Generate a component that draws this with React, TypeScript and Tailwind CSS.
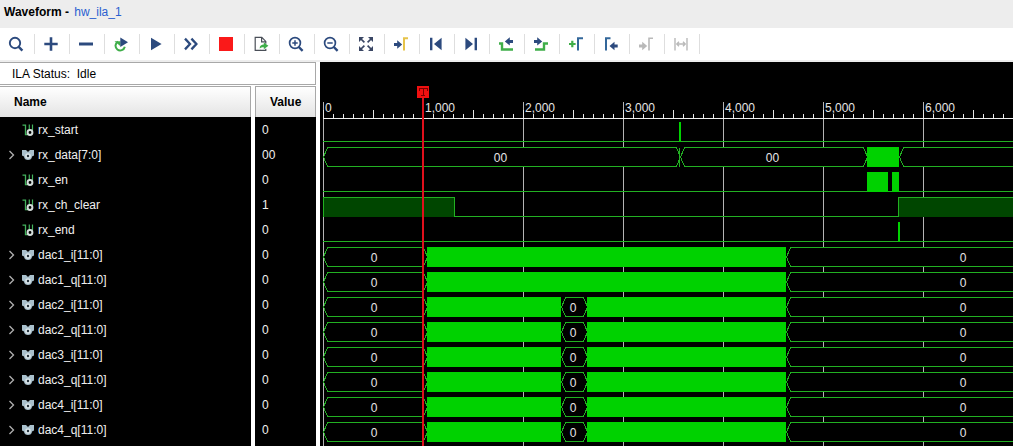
import React, { useLayoutEffect, useRef, useState } from 'react';

interface Segment {
    from: number;
    to: number;
    kind: 'value' | 'busy' | 'high' | 'low' | 'glitch';
    label?: string;
}

interface Signal {
    name: string;
    value: string;
    bus?: boolean;
    segments: Segment[];
}

const TOTAL = 8192;
const ROW = 25;
const RULER = 55;
const ORIGIN = 3;
const TRIGGER = 1000;

const LINE = '#22b022';
const FILL = '#00d200';

const dac1: Segment[] = [
    { from: 0, to: 1040, kind: 'value', label: '0' },
    { from: 1040, to: 4630, kind: 'busy' },
    { from: 4630, to: TOTAL, kind: 'value', label: '0' },
];

const dac: Segment[] = [
    { from: 0, to: 1040, kind: 'value', label: '0' },
    { from: 1040, to: 2380, kind: 'busy' },
    { from: 2380, to: 2640, kind: 'value', label: '0' },
    { from: 2640, to: 4630, kind: 'busy' },
    { from: 4630, to: TOTAL, kind: 'value', label: '0' },
];

const signals: Signal[] = [
    {
        name: 'rx_start',
        value: '0',
        segments: [
            { from: 0, to: TOTAL, kind: 'low' },
            { from: 3560, to: 3580, kind: 'busy' },
        ],
    },
    {
        name: 'rx_data[7:0]',
        value: '00',
        bus: true,
        segments: [
            { from: 0, to: 3570, kind: 'value', label: '00' },
            { from: 3570, to: 5440, kind: 'value', label: '00' },
            { from: 3560, to: 3570, kind: 'glitch' },
            { from: 5440, to: 5760, kind: 'busy' },
            { from: 5760, to: TOTAL, kind: 'value', label: '00' },
        ],
    },
    {
        name: 'rx_en',
        value: '0',
        segments: [
            { from: 0, to: TOTAL, kind: 'low' },
            { from: 5440, to: 5650, kind: 'busy' },
            { from: 5690, to: 5760, kind: 'busy' },
        ],
    },
    {
        name: 'rx_ch_clear',
        value: '1',
        segments: [
            { from: 0, to: 1310, kind: 'high' },
            { from: 1310, to: 5750, kind: 'low' },
            { from: 5750, to: TOTAL, kind: 'high' },
        ],
    },
    {
        name: 'rx_end',
        value: '0',
        segments: [
            { from: 0, to: TOTAL, kind: 'low' },
            { from: 5750, to: 5770, kind: 'busy' },
        ],
    },
    { name: 'dac1_i[11:0]', value: '0', bus: true, segments: dac1 },
    { name: 'dac1_q[11:0]', value: '0', bus: true, segments: dac1 },
    { name: 'dac2_i[11:0]', value: '0', bus: true, segments: dac },
    { name: 'dac2_q[11:0]', value: '0', bus: true, segments: dac },
    { name: 'dac3_i[11:0]', value: '0', bus: true, segments: dac },
    { name: 'dac3_q[11:0]', value: '0', bus: true, segments: dac },
    { name: 'dac4_i[11:0]', value: '0', bus: true, segments: dac },
    { name: 'dac4_q[11:0]', value: '0', bus: true, segments: dac },
];

const NAVY = '#2c4a7e';
const GREEN = '#3fae49';
const GRAY = '#b9b9b9';

const arrowRight = 'M0 -1.5h3.2v-2.7l5 4.2l-5 4.2v-2.7h-3.2z';
const arrowLeft = 'M8.2 -1.5h-3.2v-2.7l-5 4.2l5 4.2v-2.7h3.2z';

const tools: { label: string; icon: React.ReactNode }[] = [
    {
        label: 'Search',
        icon: (
            <g fill="none" stroke={NAVY} strokeWidth="1.9">
                <circle cx="7" cy="7" r="5.2" />
                <path d="M10.5 10.7l3.9 4" strokeWidth="2.4" />
            </g>
        ),
    },
    { label: 'Add', icon: <path d="M1.3 8h13.4M8 1.3v13.4" stroke={NAVY} strokeWidth="2.6" /> },
    { label: 'Remove', icon: <path d="M1 8h14" stroke={NAVY} strokeWidth="3" /> },
    {
        label: 'Run trigger',
        icon: (
            <g>
                <path d="M5 5.6A4.7 4.7 0 1 0 11.8 10.8" fill="none" stroke={GREEN} strokeWidth="2" />
                <path d="M1.5 5.2h6v5z" fill={GREEN} />
                <path d="M7.3 1.4l7.7 4.9l-7.7 4.7z" fill={NAVY} />
            </g>
        ),
    },
    { label: 'Run', icon: <path d="M3 1.8l10.6 6.2l-10.6 6.2z" fill={NAVY} /> },
    {
        label: 'Run immediate',
        icon: <path d="M2 2.6l5 5.4l-5 5.4M8.4 2.6l5 5.4l-5 5.4" fill="none" stroke={NAVY} strokeWidth="2.3" />,
    },
    { label: 'Stop', icon: <path d="M1 1h14v14h-14z" fill="#fa1919" /> },
    {
        label: 'Export',
        icon: (
            <g>
                <path d="M8 14.4H2.2V1.4h6.6l4 4v2.4M8.6 1.6v4.2h4" fill="none" stroke="#4a4f58" strokeWidth="1.2" />
                <path d="M7.5 14.4h5.3v-1.6" fill="none" stroke="#4a4f58" strokeWidth="1.2" />
                <path d="M6.6 12.6c.2-3 1.8-4 4.2-4v-2.2l4.6 3.4l-4.6 3.4v-2c-2 0-3 .2-4.200 1.400z" fill={GREEN} />
            </g>
        ),
    },
    {
        label: 'Zoom in',
        icon: (
            <g fill="none" stroke={NAVY} strokeWidth="1.7">
                <circle cx="7" cy="7" r="5.4" />
                <path d="M10.8 11l3.8 3.8" strokeWidth="2.4" />
                <path d="M4.3 7h5.4M7 4.3v5.4" strokeWidth="1.5" />
            </g>
        ),
    },
    {
        label: 'Zoom out',
        icon: (
            <g fill="none" stroke={NAVY} strokeWidth="1.7">
                <circle cx="7" cy="7" r="5.4" />
                <path d="M10.8 11l3.8 3.8" strokeWidth="2.4" />
                <path d="M4.3 7h5.4" strokeWidth="1.5" />
            </g>
        ),
    },
    {
        label: 'Zoom fit',
        icon: (
            <g>
                <path d="M1 1h5l-5 5zM15 1v5l-5-5zM1 15v-5l5 5zM15 15h-5l5-5z" fill="#3a4664" />
                <path d="M3 3l3.4 3.4M13 3l-3.4 3.4M3 13l3.4-3.4M13 13l-3.4-3.4" stroke="#3a4664" strokeWidth="1.7" />
            </g>
        ),
    },
    {
        label: 'Go to trigger',
        icon: (
            <g>
                <path d={arrowRight} transform="translate(1 8.5)" fill={NAVY} />
                <path d="M11 14.5V2.3h4" fill="none" stroke="#e6c34a" strokeWidth="2" />
            </g>
        ),
    },
    {
        label: 'Go to start',
        icon: <path d="M2 1.8h2.4v12.4h-2.4zM13.6 1.8v12.4l-7.6-6.2z" fill={NAVY} />,
    },
    {
        label: 'Go to end',
        icon: <path d="M11.6 1.8h2.4v12.4h-2.4zM2.4 1.8v12.4l7.6-6.2z" fill={NAVY} />,
    },
    {
        label: 'Previous transition',
        icon: (
            <g>
                <path d="M1 7.5h3v6h11" fill="none" stroke={GREEN} strokeWidth="2.4" />
                <path d={arrowLeft} transform="translate(6.8 5.4)" fill={NAVY} />
            </g>
        ),
    },
    {
        label: 'Next transition',
        icon: (
            <g>
                <path d="M2 13.5h9v-6h4" fill="none" stroke={GREEN} strokeWidth="2.4" />
                <path d={arrowRight} transform="translate(1 5.4)" fill={NAVY} />
            </g>
        ),
    },
    {
        label: 'Add marker',
        icon: (
            <g>
                <path d="M1 8h6.6M4.3 4.7v6.6" stroke={GREEN} strokeWidth="2.2" />
                <path d="M10 14.5V2.3h5" fill="none" stroke="#33679a" strokeWidth="2" />
            </g>
        ),
    },
    {
        label: 'Previous marker',
        icon: (
            <g>
                <path d="M3 14.5V2.3h4.5" fill="none" stroke="#33679a" strokeWidth="2" />
                <path d={arrowLeft} transform="translate(6.5 10)" fill={NAVY} />
            </g>
        ),
    },
    {
        label: 'Next marker',
        icon: (
            <g>
                <path d={arrowRight} transform="translate(1 10)" fill={GRAY} />
                <path d="M11 14.5V2.3h4" fill="none" stroke={GRAY} strokeWidth="1.6" />
            </g>
        ),
    },
    {
        label: 'Swap cursors',
        icon: (
            <g fill="none" stroke={GRAY} strokeWidth="1.4">
                <path d="M2 2v12.5M14 2v12.5M4 8h8M6 5.8l-2.2 2.2l2.2 2.2M10 5.8l2.2 2.2l-2.2 2.2" />
            </g>
        ),
    },
];

const x = (sample: number) => ORIGIN + Math.round(sample / 10);

function BitIcon() {
    return (
        <svg width="12" height="12" viewBox="0 0 12 12" fill="none">
            <path d="M0.5 1.2h3v9.300h2.500" stroke="#43b25c" strokeWidth="1.3" />
            <path d="M7.300 0.500v5.500M10.500 0.500v6" stroke="#43b25c" strokeWidth="1.2" />
            <circle cx="8" cy="8.5" r="2.4" stroke="#d5dedb" strokeWidth="2" />
        </svg>
    );
}

function BusIcon() {
    return (
        <svg width="12" height="12" viewBox="0 0 12 12">
            <path d="M0 1h4l2 2l2-2h4v5.500l-2 1c0 2.500-2 3.500-4 3.500s-4-1-4-3.500l-2-1z" fill="#a9c0cc" />
            <circle cx="6" cy="7" r="2.8" fill="#dbe6ea" />
            <circle cx="6" cy="7" r="1.2" fill="#22303a" />
        </svg>
    );
}

function Wave({ signal, top, visible }: { signal: Signal; top: number; visible: number }) {
    const high = top + 5.5;
    const low = top + 24.5;
    const mid = top + 15;

    return (
        <g>
            {signal.segments.map((s, i) => {
                const a = x(s.from);
                const b = x(s.to);
                if (s.kind === 'busy') {
                    return <rect key={i} x={a} y={top + 5} width={b - a} height="20" fill={FILL} />;
                }
                if (s.kind === 'low') {
                    return <path key={i} d={`M${a} ${low}H${b}`} stroke={LINE} />;
                }
                if (s.kind === 'glitch') {
                    return <path key={i} d={`M${a + 0.5} ${high}V${low}`} stroke={LINE} />;
                }
                if (s.kind === 'high') {
                    return (
                        <g key={i}>
                            <rect x={a} y={top + 5} width={b - a} height="20" fill="#004600" />
                            <path
                                d={`M${a + 0.5} ${low}V${high}H${b + 0.5}V${low}`}
                                fill="none"
                                stroke={LINE}
                            />
                        </g>
                    );
                }
                const center = (a + b) / 2 - 1;
                return (
                    <g key={i}>
                        <path
                            d={`M${a + 0.5} ${mid}L${a + 4.5} ${high}H${b - 3.5}L${b + 0.5} ${mid}L${b - 3.5} ${low}H${a + 4.5}Z`}
                            fill="#000"
                            stroke={LINE}
                        />
                        {center + 10 < visible && (
                            <text x={center} y={top + 20} textAnchor="middle" fill="#e6e6e6">
                                {s.label}
                            </text>
                        )}
                    </g>
                );
            })}
        </g>
    );
}

function WaveChart() {
    const box = useRef<HTMLElement>(null);
    const [visible, setVisible] = useState(0);

    // labels that would be cut by the right edge are left out
    useLayoutEffect(() => {
        const el = box.current;
        if (!el) return;
        const update = () => setVisible(el.clientWidth);
        update();
        const observer = new ResizeObserver(update);
        observer.observe(el);
        return () => observer.disconnect();
    }, []);

    const width = x(TOTAL);
    const height = RULER + signals.length * ROW;
    const ticks = Array.from({ length: Math.floor(TOTAL / 100) + 1 }, (_, i) => i * 100);
    const majors = ticks.filter((t) => t % 1000 === 0);
    const cursor = x(TRIGGER);

    return (
        <main ref={box} className="flex min-w-0 flex-1 overflow-hidden bg-black">
            <svg
                width={width}
                height={height}
                className="block shrink-0 overflow-visible font-['Liberation_Sans',sans-serif] text-xs"
                shapeRendering="crispEdges"
            >
                {majors.map((t) => (
                    <path key={t} d={`M${x(t) + 0.5} 40V${height + 4}`} stroke="#b4b4b4" />
                ))}
                {ticks.map((t) => (
                    <path key={t} d={`M${x(t) + 0.5} ${t % 500 === 0 ? 48 : 52}V56`} stroke="#e6e6e6" />
                ))}
                <path d={`M${ORIGIN} 56.5H${width}`} stroke="#f0f0f0" />
                {majors
                    .filter((t) => x(t) + 34 < visible)
                    .map((t) => (
                        <text key={t} x={x(t) + 2} y="50" fill="#e6e6e6">
                            {t.toLocaleString('en-US')}
                        </text>
                    ))}
                {signals.map((s, i) => (
                    <Wave key={s.name} signal={s} top={RULER + i * ROW} visible={visible} />
                ))}
                <path d={`M${cursor} 24V${height + 4}`} stroke="#e0101c" strokeWidth="2" />
                <rect x={cursor - 6} y="24" width="12" height="12" fill="#f01010" />
                <path
                    d={`M${cursor - 4} 28.5V26.5H${cursor + 4}V28.5M${cursor} 26V34M${cursor - 2} 33.5H${cursor + 2}`}
                    fill="none"
                    stroke="#7a0000"
                />
            </svg>
        </main>
    );
}

export default function App() {
    const [open, setOpen] = useState<string | null>(null);

    return (
        <div className="flex min-h-screen flex-col overflow-hidden bg-white font-['Liberation_Sans',Arial,sans-serif] text-xs text-black">
            <header className="flex h-7 items-start gap-0.5 bg-[#ededed] px-1 pt-1">
                <h1 className="font-bold whitespace-pre">Waveform - </h1>
                <a href="#hw_ila_1" className="text-[#2a5fd0]">hw_ila_1</a>
            </header>

            <div className="flex h-8 items-center">
                {tools.map((t) => (
                    <button
                        key={t.label}
                        type="button"
                        aria-label={t.label}
                        className="flex h-5 w-[35px] shrink-0 items-center justify-center border-r border-[#dedede] pr-0.5"
                    >
                        <svg width="16" height="16" viewBox="0 0 16 16">{t.icon}</svg>
                    </button>
                ))}
            </div>

            <div className="flex flex-1 border-t-2 border-[#ededed]">
                <aside className="flex w-80 shrink-0 flex-col">
                    <div className="mr-1 mb-px flex h-[23px] items-center border-y border-r border-[#a8a8a8] pl-3 whitespace-pre">
                        ILA Status:  Idle
                    </div>
                    <table className="w-full table-fixed border-separate border-spacing-0 text-left">
                        <thead>
                            <tr>
                                <th className="w-[255px] border-r-4 border-white p-0">
                                    <div className="flex h-[31px] items-center border-t border-r border-[#a8a8a8] bg-linear-to-b from-white to-[#e4e4e4] pl-3.5">
                                        Name
                                    </div>
                                </th>
                                <th className="border-r-4 border-white p-0">
                                    <div className="flex h-[31px] items-center border-x border-t border-[#a8a8a8] bg-linear-to-b from-white to-[#e4e4e4] pl-3.5">
                                        Value
                                    </div>
                                </th>
                            </tr>
                        </thead>
                        <tbody className="text-[#f0f0f0]">
                            {signals.map((s) => (
                                <tr key={s.name}>
                                    <td className="h-[25px] border-r-4 border-white bg-black p-0">
                                        <div className="flex items-center pl-2">
                                            {s.bus ? (
                                                <button
                                                    type="button"
                                                    aria-label={`Expand ${s.name}`}
                                                    aria-expanded={open === s.name}
                                                    onClick={() => setOpen(open === s.name ? null : s.name)}
                                                    className="w-3.5"
                                                >
                                                    <svg width="8" height="10" viewBox="0 0 8 10">
                                                        <path d="M1.5 1l4 4l-4 4" fill="none" stroke="#b0b0b0" strokeWidth="1.3" />
                                                    </svg>
                                                </button>
                                            ) : (
                                                <span className="w-3.5" />
                                            )}
                                            {s.bus ? <BusIcon /> : <BitIcon />}
                                            <span className="pl-1">{s.name}</span>
                                        </div>
                                    </td>
                                    <td className="border-r-4 border-white bg-black py-0 pr-0 pl-[7px]">{s.value}</td>
                                </tr>
                            ))}
                        </tbody>
                    </table>
                    <div className="flex flex-1 gap-1 pr-1">
                        <div className="w-[251px] bg-black" />
                        <div className="flex-1 bg-black" />
                    </div>
                </aside>

                <WaveChart />
            </div>
        </div>
    );
}
